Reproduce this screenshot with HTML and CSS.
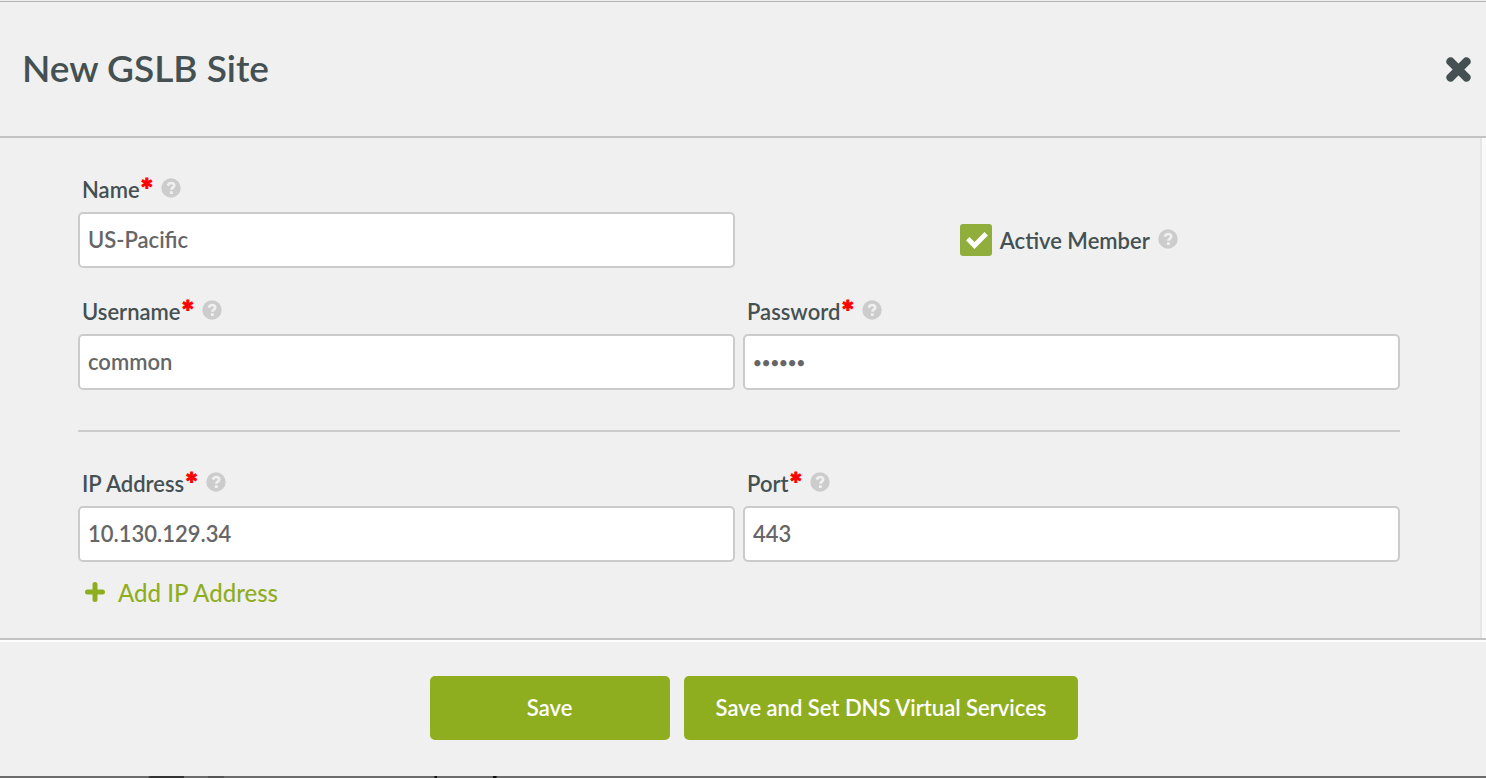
FILE: index.html
```html
<!DOCTYPE html>
<html lang="en">
<head>
<meta charset="utf-8">
<title>New GSLB Site</title>
<link rel="stylesheet" href="styles.css">
</head>
<body>
<svg class="symbols" aria-hidden="true">
  <symbol id="help" viewBox="0 0 20 20">
    <circle cx="10" cy="10" r="9.7" fill="#cccccc"/>
    <path d="M6.700 7.600C7.500 5.800 8.600 5 10 5c1.800 0 3.200 1 3.200 2.600 0 2.100-2.800 2.100-2.800 4.200" fill="none" stroke="#f0f0f0" stroke-width="2.700"/>
    <rect x="8.900" y="13.200" width="2.900" height="2.800" rx=".3" fill="#f0f0f0"/>
  </symbol>
</svg>
<form class="dialog">
  <header class="dialog-header">
    <h1 class="title">New GSLB Site</h1>
    <button class="close" type="button" aria-label="Close">
      <svg class="close-icon" viewBox="0 0 26 26"><path d="M5.200 5.200 20.800 20.800M20.800 5.200 5.200 20.800" fill="none" stroke="currentColor" stroke-width="7.600" stroke-linecap="round"/><path d="M4 4 22 22M22 4 4 22" fill="none" stroke="currentColor" stroke-width="7.600"/></svg>
    </button>
  </header>
  <main class="dialog-body">
    <div class="fields">
      <div class="field">
        <div class="label-row"><label for="name">Name</label><span class="required">*</span><svg class="help"><use href="#help"/></svg></div>
        <input class="text-input" id="name" type="text" value="US-Pacific">
      </div>
      <div class="check-field">
        <span class="check-box">
          <input class="check" id="active" type="checkbox" checked>
          <svg class="tick" viewBox="0 0 32 32"><path d="M9.500 16.500 14.500 21.500 24.500 11.500" fill="none" stroke="#ffffff" stroke-width="4.800" stroke-linecap="square"/></svg>
        </span>
        <label for="active">Active Member</label>
        <svg class="help"><use href="#help"/></svg>
      </div>
      <div class="field">
        <div class="label-row"><label for="username">Username</label><span class="required">*</span><svg class="help"><use href="#help"/></svg></div>
        <input class="text-input" id="username" type="text" value="common">
      </div>
      <div class="field">
        <div class="label-row"><label for="password">Password</label><span class="required">*</span><svg class="help"><use href="#help"/></svg></div>
        <input class="text-input password" id="password" type="password" value="common">
      </div>
    </div>
    <hr class="divider">
    <div class="fields">
      <div class="field">
        <div class="label-row"><label for="ip">IP Address</label><span class="required">*</span><svg class="help"><use href="#help"/></svg></div>
        <input class="text-input" id="ip" type="text" value="10.130.129.34">
      </div>
      <div class="field">
        <div class="label-row"><label for="port">Port</label><span class="required">*</span><svg class="help"><use href="#help"/></svg></div>
        <input class="text-input" id="port" type="text" value="443">
      </div>
    </div>
    <button class="add" type="button">
      <svg class="plus" viewBox="0 0 20 20"><path d="M10 2.500v15M2.500 10h15" stroke="currentColor" stroke-width="5" stroke-linecap="round"/></svg>
      Add IP Address
    </button>
  </main>
  <footer class="dialog-footer">
    <button class="action" type="submit">Save</button>
    <button class="action" type="button">Save and Set DNS Virtual Services</button>
  </footer>
  <svg class="page-edge" aria-hidden="true">
    <path d="M150 0h34v2h-36z" fill="#333333"/>
    <path d="M208 0h16v2h-16z" fill="#555555"/>
    <path d="M434 0h3v2h-2zM493 0h4l-1 2h-3z" fill="#111111"/>
  </svg>
</form>
</body>
</html>
```
FILE: styles.css
```css
* {
  box-sizing: border-box;
}

body {
  margin: 0;
  background: #f0f0f0;
  color: #445052;
  font-family: Lato, "Liberation Sans", sans-serif;
  font-size: 22px;
  font-weight: 600;
}

button,
input {
  font: inherit;
}

button {
  cursor: pointer;
}

.symbols {
  display: none;
}

.dialog {
  display: flex;
  flex-direction: column;
  min-height: 100vh;
  padding-top: 1px;
}

.dialog-header {
  display: flex;
  align-items: center;
  justify-content: space-between;
  height: 137px;
  padding: 0 14px 0 22px;
  border-top: 1px solid #b4b4b4;
  border-bottom: 2px solid #c3c3c3;
}

.title {
  margin: 0;
  padding-bottom: 3px;
  font-size: 37px;
  font-weight: 600;
}

.close {
  display: flex;
  padding: 0;
  border: 0;
  background: none;
  color: #445052;
}

.close-icon {
  width: 27px;
  height: 27px;
}

.dialog-body {
  flex: 1;
  padding: 36px 82px 28px 78px;
  border-right: 4px solid #fafafa;
  box-shadow: inset -2px 0 #e6e6e6;
}

.fields {
  display: grid;
  grid-template-columns: 1fr 1fr;
  gap: 28px 8px;
}

.label-row {
  display: flex;
  align-items: center;
  height: 38px;
  padding: 0 4px 8px;
}

.required {
  padding: 0 8px 0 1px;
  color: #ff0000;
  font-size: 30px;
  font-weight: 900;
  line-height: 28px;
  -webkit-text-stroke: 1px #ff0000;
}

.help {
  width: 20px;
  height: 20px;
  margin-bottom: 2px;
}

.text-input {
  display: block;
  width: 100%;
  height: 56px;
  padding: 0 8px 1px;
  border: 2px solid #cbcbcb;
  border-radius: 5px;
  outline: 0;
  background: #ffffff;
  color: #666666;
}

.password {
  padding-bottom: 0;
  font-size: 15px;
}

.check-field {
  display: flex;
  align-items: center;
  align-self: end;
  gap: 8px;
  height: 56px;
  padding-left: 33%;
}

.check-box {
  display: grid;
}

.check,
.tick {
  grid-area: 1 / 1;
  width: 32px;
  height: 32px;
}

.check {
  appearance: none;
  margin: 0;
  border-radius: 3px;
  background: #8fae3c;
}

.tick {
  visibility: hidden;
  pointer-events: none;
}

.check:checked + .tick {
  visibility: visible;
}

.divider {
  height: 2px;
  margin: 40px 0 36px;
  border: 0;
  background: #cccccc;
}

.add {
  display: flex;
  align-items: center;
  gap: 13px;
  height: 32px;
  margin-top: 14px;
  padding: 0 7px;
  border: 0;
  background: none;
  color: #8fae1f;
  font-size: 24px;
  font-weight: 500;
}

.plus {
  width: 20px;
  height: 20px;
}

.dialog-footer {
  display: flex;
  justify-content: center;
  gap: 14px;
  padding: 36px 0 36px 22px;
  border-top: 2px solid #c3c3c3;
  box-shadow: inset 0 2px #fcfcfc;
}

.action {
  min-width: 240px;
  height: 64px;
  padding: 0 32px 1px;
  border: 0;
  border-radius: 5px;
  background: #8fae1f;
  color: #ffffff;
}

.page-edge {
  width: 100%;
  height: 2px;
  background: #6c6c6c;
}
```
